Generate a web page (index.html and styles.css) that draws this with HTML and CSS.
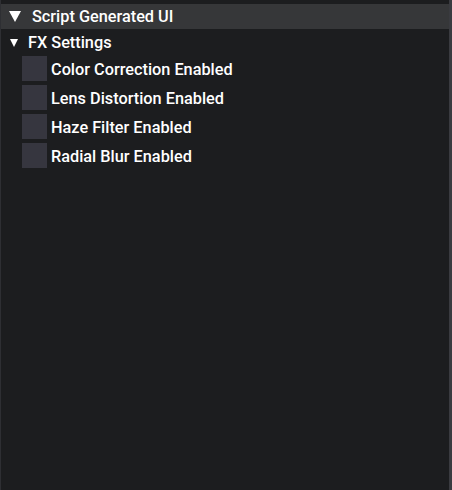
FILE: index.html
```html
<!DOCTYPE html>
<html>
<head>
<meta charset="utf-8">
<link rel="stylesheet" href="styles.css">
</head>
<body>
<div class="window">
  <div class="content">
    <div class="header">
      <span class="tri big"></span>
      <span class="header-text">Script Generated UI</span>
    </div>
    <div class="node">
      <span class="tri small"></span>
      <span class="node-text">FX Settings</span>
    </div>
    <div class="items">
      <div class="item"><span class="box"></span><span class="label">Color Correction Enabled</span></div>
      <div class="item"><span class="box"></span><span class="label">Lens Distortion Enabled</span></div>
      <div class="item"><span class="box"></span><span class="label">Haze Filter Enabled</span></div>
      <div class="item"><span class="box"></span><span class="label">Radial Blur Enabled</span></div>
    </div>
  </div>
  <div class="edge"></div>
</div>
</body>
</html>
```
FILE: styles.css
```css
html, body {
  margin: 0;
  padding: 0;
  background: #1c1d1f;
}
.window {
  width: 452px;
  height: 490px;
  display: flex;
  background: #1c1d1f;
  font-family: Roboto, "Noto Sans", sans-serif;
  font-weight: 500;
  color: #ffffff;
  box-sizing: border-box;
  border-left: 1px solid #2e2f33;
}
.content {
  flex: 1;
  padding-top: 4px;
}
.edge {
  width: 3px;
  background: #3a3b40;
}
.header {
  height: 25px;
  background: #363739;
  display: flex;
  align-items: center;
}
.tri {
  display: inline-block;
  width: 0;
  height: 0;
}
.tri.big {
  margin-left: 8px;
  border-left: 6px solid transparent;
  border-right: 6px solid transparent;
  border-top: 11px solid #ffffff;
}
.header-text {
  margin-left: 11px;
  font-size: 16.3px;
}
.node {
  height: 27px;
  display: flex;
  align-items: center;
}
.tri.small {
  margin-left: 9px;
  border-left: 4.5px solid transparent;
  border-right: 4.5px solid transparent;
  border-top: 8px solid #ffffff;
}
.node-text {
  margin-left: 10px;
  font-size: 16.3px;
}
.items {
  display: flex;
  flex-direction: column;
  gap: 4px;
  padding-left: 21px;
}
.item {
  display: flex;
  align-items: center;
  height: 25px;
}
.box {
  width: 25px;
  height: 25px;
  background: #36363f;
}
.label {
  margin-left: 4px;
  font-size: 16.3px;
  padding-top: 2px;
}
```
